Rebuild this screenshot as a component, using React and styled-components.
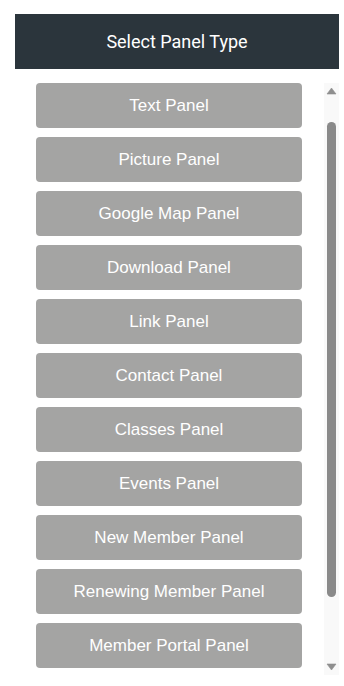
import React, { useEffect, useRef, useState } from "react";
import styled, { createGlobalStyle } from "styled-components";

const panelTypes = [
  "Text Panel",
  "Picture Panel",
  "Google Map Panel",
  "Download Panel",
  "Link Panel",
  "Contact Panel",
  "Classes Panel",
  "Events Panel",
  "New Member Panel",
  "Renewing Member Panel",
  "Member Portal Panel",
];

const ARROW = 15;

const GlobalStyle = createGlobalStyle`
  body {
    margin: 0;
    background: #ffffff;
    font-family: "Liberation Sans", Arial, sans-serif;
  }
`;

const App = () => {
  const listRef = useRef(null);
  const [metrics, setMetrics] = useState({ top: 0, client: 1, total: 1 });

  const measure = () => {
    const el = listRef.current;
    if (!el) return;
    setMetrics({
      top: el.scrollTop,
      client: el.clientHeight,
      total: el.scrollHeight,
    });
  };

  useEffect(() => {
    if (listRef.current) listRef.current.scrollTop = 30;
    measure();
  }, []);

  const trackLen = metrics.client - ARROW * 2;
  const thumbLen = Math.max(20, (trackLen * metrics.client) / metrics.total);
  const maxScroll = Math.max(1, metrics.total - metrics.client);
  const thumbTop = ARROW + (metrics.top / maxScroll) * (trackLen - thumbLen);

  const scrollBy = (d) => {
    if (listRef.current) listRef.current.scrollTop += d;
  };

  return (
    <>
      <GlobalStyle />
      <Wrapper>
        <Header>Select Panel Type</Header>
        <PanelArea>
          <PanelList ref={listRef} onScroll={measure}>
            {panelTypes.map((type) => (
              <PanelButton key={type}>{type}</PanelButton>
            ))}
          </PanelList>
          <ScrollTrack>
            <ScrollArrow onClick={() => scrollBy(-40)}>
              <svg width="15" height="15" viewBox="0 0 15 15">
                <path
                  d="M3 11 L7.5 5 L12 11 Z"
                  fill="#8f8f8f"
                  stroke="#8f8f8f"
                  strokeWidth="0.6"
                  strokeLinejoin="round"
                />
              </svg>
            </ScrollArrow>
            <ScrollThumb style={{ top: thumbTop, height: thumbLen }} />
            <ScrollArrow onClick={() => scrollBy(40)}>
              <svg width="15" height="15" viewBox="0 0 15 15">
                <path
                  d="M3 4 L7.5 10 L12 4 Z"
                  fill="#8f8f8f"
                  stroke="#8f8f8f"
                  strokeWidth="0.6"
                  strokeLinejoin="round"
                />
              </svg>
            </ScrollArrow>
          </ScrollTrack>
        </PanelArea>
      </Wrapper>
    </>
  );
};

const Wrapper = styled.div`
  width: 324px;
  margin: 14px 0 0 15px;
  display: flex;
  flex-direction: column;
`;

const Header = styled.div`
  height: 55px;
  background: #2b353c;
  color: #ffffff;
  font-family: Roboto, "Liberation Sans", sans-serif;
  font-size: 18px;
  display: flex;
  align-items: center;
  justify-content: center;
`;

const PanelArea = styled.div`
  margin-top: 14px;
  height: 592px;
  display: flex;
`;

const PanelList = styled.div`
  flex: 1;
  overflow-y: auto;
  scrollbar-width: none;
  display: flex;
  flex-direction: column;
  gap: 9px;
  padding: 30px 0 85px;
  box-sizing: border-box;

  &::-webkit-scrollbar {
    display: none;
  }
`;

const PanelButton = styled.button`
  flex: none;
  width: 266px;
  height: 45px;
  margin-left: 21px;
  border: none;
  border-radius: 4px;
  background: #a4a4a3;
  color: #ffffff;
  font-family: "Liberation Sans", Arial, sans-serif;
  font-size: 17px;
  cursor: pointer;
  transition: background 200ms ease;

  &:hover {
    background: #8f8f8e;
  }
`;

const ScrollTrack = styled.div`
  position: relative;
  width: 15px;
  background: #f9f9f9;
  display: flex;
  flex-direction: column;
  justify-content: space-between;
`;

const ScrollArrow = styled.div`
  height: 15px;
  display: flex;
  align-items: center;
  justify-content: center;
  cursor: default;
`;

const ScrollThumb = styled.div`
  position: absolute;
  left: 3px;
  width: 9px;
  border-radius: 5px;
  background: #8a8a8a;
`;

export default App;
